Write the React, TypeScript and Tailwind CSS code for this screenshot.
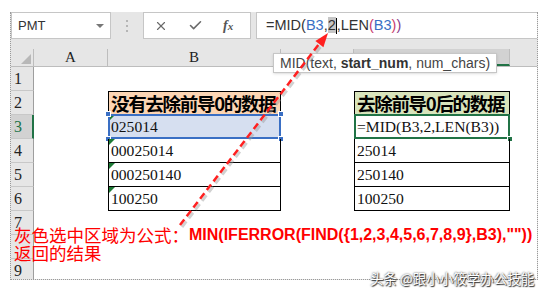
import { X, Check } from 'lucide-react';

const SERIF = "font-['Liberation_Serif','Noto_Sans_CJK_SC',serif]";
const CJK = "font-['Noto_Sans_CJK_SC',sans-serif]";
const UI = "font-['Liberation_Sans','Noto_Sans_CJK_SC',sans-serif]";

const ROWS = [1, 2, 3, 4, 5, 6, 7, 8, 9];

const leftData: Record<number, string> = { 3: '025014', 4: '00025014', 5: '000250140', 6: '100250' };
const rightData: Record<number, string> = { 4: '25014', 5: '250140', 6: '100250' };

function ErrorMark() {
  return (
    <span className="absolute left-0 top-0 w-0 h-0 border-t-[6px] border-t-[#1d7a35] border-r-[6px] border-r-transparent" />
  );
}

function Handle({ className }: { className: string }) {
  return <span className={`absolute w-[6px] h-[6px] bg-[#3a6fc4] border border-white ${className}`} />;
}

export default function App() {
  return (
    <div className="relative w-[550px] h-[293px] overflow-hidden bg-white">
      <div className="pl-[10px] pt-[12px]">
        <div className="w-[528px] h-[268px] flex flex-col bg-[#e6e6e6] overflow-hidden border-l border-r border-b border-dotted border-[#9a9a9a]">
          {/* formula bar */}
          <div className="h-[37px] flex items-start shrink-0">
            <div className="w-[100px] h-[27px] bg-white border border-[#c6c6c6] flex items-center justify-between pl-[6px] pr-[6px]">
              <span className={`${UI} text-[13px] text-[#333]`}>PMT</span>
              <span className="w-0 h-0 border-l-[4px] border-r-[4px] border-t-[4px] border-l-transparent border-r-transparent border-t-[#777]" />
            </div>
            <div className="w-[32px] h-[27px] flex flex-col items-center justify-center gap-[3px]">
              <span className="w-[2px] h-[2px] bg-[#b5b5b5]" />
              <span className="w-[2px] h-[2px] bg-[#b5b5b5]" />
              <span className="w-[2px] h-[2px] bg-[#b5b5b5]" />
            </div>
            <div className="w-[108px] h-[27px] bg-white border border-[#c6c6c6] flex items-center pl-[10px] gap-[20px]">
              <X className="w-[14px] h-[14px] text-[#6a6a6a]" strokeWidth={2} />
              <Check className="w-[15px] h-[15px] text-[#6a6a6a]" strokeWidth={2.5} />
              <span className="font-['Liberation_Serif',serif] italic text-[14px] text-[#555] font-bold">
                f<span className="text-[11px]">x</span>
              </span>
            </div>
            <div className="ml-[5px] flex-1 h-[27px] bg-white border border-[#c6c6c6] border-r-0 flex items-center pl-[9px]">
              <span className={`${UI} text-[14.5px] text-[#333] whitespace-pre`}>
                =MID(<span className="text-[#3a6fc4]">B3</span>,<span className="bg-[#c6c6c6]">2</span>
                <span className="inline-block w-[1px] h-[16px] bg-black align-middle" />
                ,LEN<span className="text-[#c83c6e]">(</span>
                <span className="text-[#3a6fc4]">B3</span>
                <span className="text-[#c83c6e]">)</span>
                <span className="text-[#8a3a8a]">)</span>
              </span>
            </div>
          </div>

          {/* column header */}
          <div className="h-[18px] flex border-b border-[#bdbdbd] bg-[#e6e6e6] shrink-0">
            <div className="relative w-[23px] h-full border-r border-[#bdbdbd]">
              <span className="absolute right-[2px] bottom-[2px] w-0 h-0 border-l-[10px] border-b-[10px] border-l-transparent border-b-[#b8b8b8]" />
            </div>
            <div className={`w-[74px] h-full border-r border-[#bdbdbd] flex items-center justify-center ${SERIF} text-[15px] text-[#222]`}>A</div>
            <div className={`w-[173px] h-full border-r border-[#bdbdbd] flex items-center justify-center ${SERIF} text-[15px] text-[#222]`}>B</div>
            <div className="w-[73px] h-full border-r border-[#bdbdbd]" />
            <div className="w-[156px] h-full border-r border-[#bdbdbd] bg-[#d2d2d2] border-b-2 border-b-[#217346]" />
            <div className="flex-1 h-full" />
          </div>

          {/* rows */}
          {ROWS.map((r) => (
            <div key={r} className="h-[24px] flex shrink-0 bg-white">
              <div
                className={`w-[23px] h-full border-b border-[#c8c8c8] flex items-center pl-[3px] ${SERIF} text-[16px] ${
                  r === 3 ? 'bg-[#d2d2d2] text-[#217346] border-r-2 border-r-[#217346]' : 'bg-[#e6e6e6] text-[#222] border-r border-r-[#9e9e9e]'
                }`}
              >
                {r === 8 ? '' : r}
              </div>
              <div className="w-[74px] h-full" />
              {/* column B */}
              <div
                className={`relative w-[173px] h-full flex items-center pl-[2px] ${SERIF} text-[15.6px] text-[#111] whitespace-nowrap ${
                  r >= 2 && r <= 6 ? 'border-l border-r border-b border-black' : ''
                } ${r === 2 ? 'border-t bg-[#fcd5b4]' : ''} ${r === 3 ? 'bg-[#d6dff0]' : ''}`}
              >
                {r === 2 ? (
                  <span className={`${CJK} font-bold text-[18.5px] tracking-[-1.3px] leading-none text-black whitespace-nowrap`}>没有去除前导0的数据</span>
                ) : (
                  leftData[r]
                )}
                {r >= 3 && r <= 6 && <ErrorMark />}
                {r === 3 && (
                  <>
                    <span className="absolute -left-[1px] -top-[1px] -right-[1px] -bottom-[1px] border-2 border-[#3a6fc4]" />
                    <Handle className="-left-[4px] -top-[4px]" />
                    <Handle className="-right-[4px] -top-[4px]" />
                    <Handle className="-left-[4px] -bottom-[4px]" />
                    <Handle className="-right-[4px] -bottom-[4px]" />
                  </>
                )}
              </div>
              <div className="w-[73px] h-full" />
              {/* column D */}
              <div
                className={`relative w-[156px] h-full flex items-center pl-[2px] ${SERIF} text-[15.6px] text-[#111] whitespace-nowrap ${
                  r >= 2 && r <= 6 ? 'border-l border-r border-b border-black' : ''
                } ${r === 2 ? 'border-t bg-[#d8e4bc]' : ''}`}
              >
                {r === 2 && (
                  <span className={`${CJK} font-bold text-[18.5px] tracking-[-1.3px] leading-none text-black whitespace-nowrap`}>去除前导0后的数据</span>
                )}
                {r === 3 && (
                  <>
                    <span className="relative">=MID(B3,2,LEN(B3))</span>
                    <span className="absolute -left-[1px] -top-[1px] -right-[1px] -bottom-[1px] border-2 border-[#217346]" />
                    <span className="absolute -right-[4px] -bottom-[4px] w-[6px] h-[6px] bg-[#217346] border border-white" />
                  </>
                )}
                {rightData[r]}
              </div>
              <div className="flex-1 h-full" />
            </div>
          ))}
        </div>
      </div>

      {/* function tooltip */}
      <div className={`absolute left-[273px] top-[53px] h-[20px] px-[6px] flex items-center bg-white border border-[#c6c6c6] shadow-sm ${UI} text-[14px] text-[#444] whitespace-pre`}>
        MID(text, <b className="text-[#333]">start_num</b>, num_chars)
      </div>

      {/* annotation */}
      <div className="absolute left-[14px] top-[226px] text-[#ff0000]">
        <div className="h-[18px] flex items-center whitespace-nowrap">
          <span className={`${CJK} text-[17.5px] leading-none`}>灰色选中区域为公式：</span>
          <span className="font-['Liberation_Sans',sans-serif] font-bold text-[16px] leading-none">MIN(IFERROR(FIND({'{'}1,2,3,4,5,6,7,8,9{'}'},B3),""))</span>
        </div>
        <div className={`h-[18px] flex items-center ${CJK} text-[17.5px] leading-none`}>返回的结果</div>
      </div>

      {/* red arrow */}
      <svg className="absolute left-0 top-0 pointer-events-none" width="550" height="293" viewBox="0 0 550 293">
        <line x1="182" y1="227" x2="321" y2="46" stroke="#9a9a9a" strokeOpacity="0.45" strokeWidth="3" strokeDasharray="7 4" />
        <line x1="180" y1="225" x2="319" y2="44" stroke="#ff2020" strokeWidth="2.5" strokeDasharray="7 4" />
        <polygon points="328,33 323.4,47.2 315.4,41.1" fill="#ff2020" />
      </svg>

      {/* watermark */}
      <div className={`absolute left-[370px] top-[268px] ${CJK} text-[13.5px] text-white whitespace-nowrap [text-shadow:0_0_2px_#333,1px_1px_1px_#333]`}>
        头条 @跟小小筱学办公技能
      </div>
    </div>
  );
}
